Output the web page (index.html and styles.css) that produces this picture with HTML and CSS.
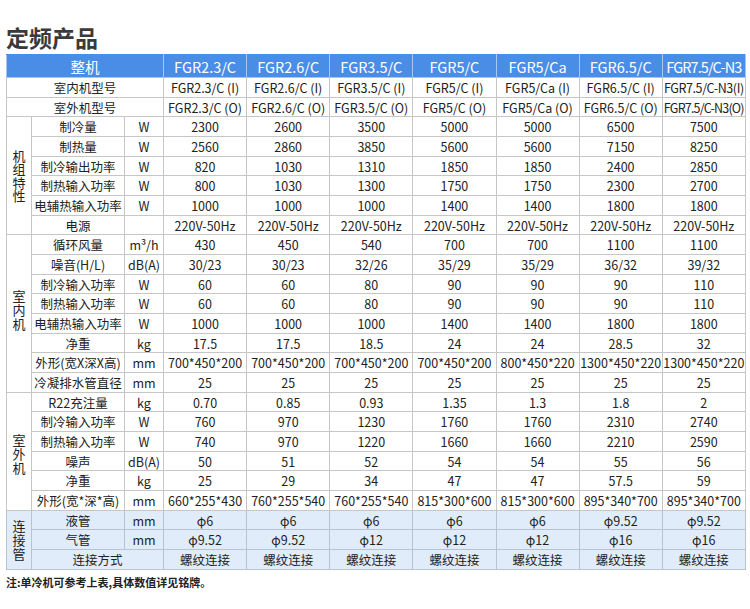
FILE: index.html
```html
<!DOCTYPE html>
<html lang="zh">
<head>
<meta charset="utf-8">
<title>定频产品</title>
<link rel="stylesheet" href="styles.css">
</head>
<body>
<div class="page">
  <h1 class="title">定频产品</h1>
  <table class="spec">
    <colgroup>
      <col class="c-group"><col class="c-item"><col class="c-unit">
      <col class="c-val"><col class="c-val"><col class="c-val"><col class="c-val"><col class="c-val"><col class="c-val"><col class="c-val">
    </colgroup>
    <thead>
      <tr class="head">
        <th colspan="3">整机</th>
        <th>FGR2.3/C</th><th>FGR2.6/C</th><th>FGR3.5/C</th><th>FGR5/C</th><th>FGR5/Ca</th><th>FGR6.5/C</th><th class="tight-head">FGR7.5/C-N3</th>
      </tr>
    </thead>
    <tbody>
      <tr><td colspan="3">室内机型号</td><td>FGR2.3/C (I)</td><td>FGR2.6/C (I)</td><td>FGR3.5/C (I)</td><td>FGR5/C (I)</td><td>FGR5/Ca (I)</td><td>FGR6.5/C (I)</td><td class="tight">FGR7.5/C-N3(I)</td></tr>
      <tr><td colspan="3">室外机型号</td><td>FGR2.3/C (O)</td><td>FGR2.6/C (O)</td><td>FGR3.5/C (O)</td><td>FGR5/C (O)</td><td>FGR5/Ca (O)</td><td>FGR6.5/C (O)</td><td class="tighter">FGR7.5/C-N3(O)</td></tr>

      <tr><td rowspan="6" class="group"><div class="vlabel g1">机组特性</div></td><td>制冷量</td><td>W</td><td>2300</td><td>2600</td><td>3500</td><td>5000</td><td>5000</td><td>6500</td><td>7500</td></tr>
      <tr><td>制热量</td><td>W</td><td>2560</td><td>2860</td><td>3850</td><td>5600</td><td>5600</td><td>7150</td><td>8250</td></tr>
      <tr><td>制冷输出功率</td><td>W</td><td>820</td><td>1030</td><td>1310</td><td>1850</td><td>1850</td><td>2400</td><td>2850</td></tr>
      <tr><td>制热输入功率</td><td>W</td><td>800</td><td>1030</td><td>1300</td><td>1750</td><td>1750</td><td>2300</td><td>2700</td></tr>
      <tr><td>电辅热输入功率</td><td>W</td><td>1000</td><td>1000</td><td>1000</td><td>1400</td><td>1400</td><td>1800</td><td>1800</td></tr>
      <tr><td>电源</td><td></td><td>220V-50Hz</td><td>220V-50Hz</td><td>220V-50Hz</td><td>220V-50Hz</td><td>220V-50Hz</td><td>220V-50Hz</td><td>220V-50Hz</td></tr>

      <tr><td rowspan="8" class="group g-in"><div class="vlabel g2">室内机</div></td><td>循环风量</td><td>m³/h</td><td>430</td><td>450</td><td>540</td><td>700</td><td>700</td><td>1100</td><td>1100</td></tr>
      <tr><td>噪音(H/L)</td><td>dB(A)</td><td>30/23</td><td>30/23</td><td>32/26</td><td>35/29</td><td>35/29</td><td>36/32</td><td>39/32</td></tr>
      <tr><td>制冷输入功率</td><td>W</td><td>60</td><td>60</td><td>80</td><td>90</td><td>90</td><td>90</td><td>110</td></tr>
      <tr><td>制热输入功率</td><td>W</td><td>60</td><td>60</td><td>80</td><td>90</td><td>90</td><td>90</td><td>110</td></tr>
      <tr><td>电辅热输入功率</td><td>W</td><td>1000</td><td>1000</td><td>1000</td><td>1400</td><td>1400</td><td>1800</td><td>1800</td></tr>
      <tr><td>净重</td><td>kg</td><td>17.5</td><td>17.5</td><td>18.5</td><td>24</td><td>24</td><td>28.5</td><td>32</td></tr>
      <tr><td>外形(宽X深X高)</td><td>mm</td><td>700*450*200</td><td>700*450*200</td><td>700*450*200</td><td>700*450*200</td><td>800*450*220</td><td>1300*450*220</td><td>1300*450*220</td></tr>
      <tr><td>冷凝排水管直径</td><td>mm</td><td>25</td><td>25</td><td>25</td><td>25</td><td>25</td><td>25</td><td>25</td></tr>

      <tr><td rowspan="6" class="group g-out"><div class="vlabel g3">室外机</div></td><td>R22充注量</td><td>kg</td><td>0.70</td><td>0.85</td><td>0.93</td><td>1.35</td><td>1.3</td><td>1.8</td><td>2</td></tr>
      <tr><td>制冷输入功率</td><td>W</td><td>760</td><td>970</td><td>1230</td><td>1760</td><td>1760</td><td>2310</td><td>2740</td></tr>
      <tr><td>制热输入功率</td><td>W</td><td>740</td><td>970</td><td>1220</td><td>1660</td><td>1660</td><td>2210</td><td>2590</td></tr>
      <tr><td>噪声</td><td>dB(A)</td><td>50</td><td>51</td><td>52</td><td>54</td><td>54</td><td>55</td><td>56</td></tr>
      <tr><td>净重</td><td>kg</td><td>25</td><td>29</td><td>34</td><td>47</td><td>47</td><td>57.5</td><td>59</td></tr>
      <tr><td>外形(宽*深*高)</td><td>mm</td><td>660*255*430</td><td>760*255*540</td><td>760*255*540</td><td>815*300*600</td><td>815*300*600</td><td>895*340*700</td><td>895*340*700</td></tr>

      <tr class="conn"><td rowspan="3" class="group"><div class="vlabel g4">连接管</div></td><td>液管</td><td>mm</td><td>φ6</td><td>φ6</td><td>φ6</td><td>φ6</td><td>φ6</td><td>φ9.52</td><td>φ9.52</td></tr>
      <tr class="conn"><td>气管</td><td>mm</td><td>φ9.52</td><td>φ9.52</td><td>φ12</td><td>φ12</td><td>φ12</td><td>φ16</td><td>φ16</td></tr>
      <tr class="conn"><td colspan="2">连接方式</td><td>螺纹连接</td><td>螺纹连接</td><td>螺纹连接</td><td>螺纹连接</td><td>螺纹连接</td><td>螺纹连接</td><td>螺纹连接</td></tr>
    </tbody>
  </table>
  <p class="note">注:单冷机可参考上表,具体数值详见铭牌。</p>
</div>
</body>
</html>
```

FILE: styles.css
```css
body {
  margin: 0;
  background: #fff;
  color: #222;
  font-family: "Noto Sans CJK SC", "Noto Sans", sans-serif;
}

.page {
  padding: 0 6px;
}

.title {
  margin: 22px 0 2px;
  font-size: 23px;
  line-height: 30px;
  font-weight: bold;
  color: #3a3a3a;
}

.spec {
  border-collapse: collapse;
  table-layout: fixed;
  width: 739px;
  font-size: 12.5px;
}

.c-group { width: 25px; }
.c-item { width: 93px; }
.c-unit { width: 39px; }
.c-val { width: 83.14px; }

.spec td,
.spec th {
  border: 1px solid #c6c6c6;
  text-align: center;
  padding: 0;
  line-height: 17px;
  white-space: nowrap;
  overflow: hidden;
}

.spec tbody tr {
  height: 19.68px;
}

.head {
  height: 23px;
}

.head th {
  background: #4a8de6;
  color: #fff;
  font-weight: normal;
  font-size: 14.5px;
  border-color: #a8c6ef;
  border-top-color: #4a8de6;
}

.tight-head {
  letter-spacing: -0.9px;
}

.tight {
  letter-spacing: -0.4px;
}

.tighter {
  letter-spacing: -0.8px;
}

.group {
  vertical-align: middle;
}

.g-in {
  border-bottom-style: hidden;
}

.vlabel {
  width: 13px;
  margin: 0 auto;
  font-size: 13px;
  line-height: 14px;
  white-space: normal;
  word-break: break-all;
  color: #222;
}

.g1 {
  line-height: 13.5px;
}

.g2 {
  position: relative;
  top: -4px;
}

.g3 {
  position: relative;
  top: 3px;
}

.conn td {
  background: #e1ecfa;
  border-color: #b9c3d0;
}

.note {
  margin: 2px 0 0;
  font-size: 11px;
  line-height: 20px;
  font-weight: bold;
  color: #222;
}
```
